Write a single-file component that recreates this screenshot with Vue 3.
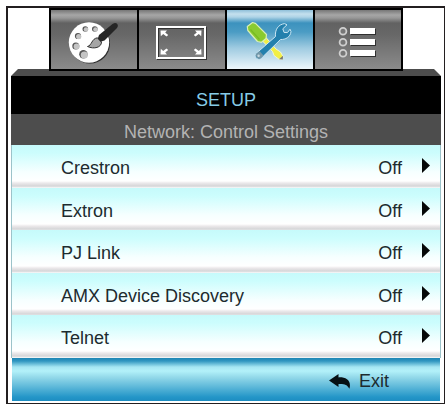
<script setup>
import { ref } from 'vue'

const activeTab = ref('setup')
const tabs = [
  { id: 'image', label: 'Image' },
  { id: 'display', label: 'Display' },
  { id: 'setup', label: 'Setup' },
  { id: 'options', label: 'Options' },
]

const settings = ref([
  { name: 'Crestron', on: false },
  { name: 'Extron', on: false },
  { name: 'PJ Link', on: false },
  { name: 'AMX Device Discovery', on: false },
  { name: 'Telnet', on: false },
])
</script>

<template>
  <main class="frame">
    <nav class="tabs">
      <button
        v-for="tab in tabs"
        :key="tab.id"
        type="button"
        class="tab"
        :class="{ active: tab.id === activeTab }"
        :aria-label="tab.label"
        @click="activeTab = tab.id"
      >
        <svg v-if="tab.id === 'image'" class="icon" viewBox="51 10 86 59" aria-hidden="true">
          <circle cx="90" cy="43.5" r="20" fill="#2b2b2b" />
          <circle cx="89" cy="42.5" r="20.2" fill="#fff" />
          <g fill="#555">
            <circle cx="85.3" cy="29" r="2.8" />
            <circle cx="94.8" cy="29" r="2.8" />
            <circle cx="78" cy="36" r="3.1" />
            <circle cx="75.8" cy="46" r="3.5" />
            <circle cx="83.4" cy="54.3" r="4.2" />
          </g>
          <g fill="#c4c4c4">
            <circle cx="86" cy="29.5" r="2.3" />
            <circle cx="95.5" cy="29.5" r="2.3" />
            <circle cx="78.7" cy="36.6" r="2.6" />
            <circle cx="76.6" cy="46.6" r="3" />
            <circle cx="84.3" cy="55" r="3.6" />
          </g>
          <path d="M87.5 46.5C92 45.5 91.5 38.5 97.5 37.8L101.5 42C101.5 47.5 94 49.5 87.5 46.5Z" fill="#a5a5a5" stroke="#333" stroke-width="1" />
          <path d="M97.8 38.6L100.5 41.8L104.5 40.5L117 28Q118.8 25 116.8 23.4Q115 22.4 112.5 24L99 35Z" fill="#262626" />
        </svg>

        <svg v-else-if="tab.id === 'display'" class="icon" viewBox="139 10 86 59" aria-hidden="true">
          <rect x="158" y="28" width="48" height="31" fill="none" stroke="#333" stroke-width="2" />
          <rect x="157" y="27" width="48" height="31" fill="none" stroke="#fff" stroke-width="2" />
          <g fill="#fff">
            <path d="M160.5 30.5H167L165.2 32.4L168.2 35L166.5 36.6L163.2 34L160.8 36.2Z" />
            <path d="M201.5 30.5H195L196.8 32.4L193.8 35L195.5 36.6L198.8 34L201.2 36.2Z" />
            <path d="M160.5 54.5H167L165.2 52.6L168.2 50L166.5 48.4L163.2 51L160.8 48.8Z" />
            <path d="M201.5 54.5H195L196.8 52.6L193.8 50L195.5 48.4L198.8 51L201.2 48.8Z" />
          </g>
        </svg>

        <svg v-else-if="tab.id === 'setup'" class="icon" viewBox="227 10 86 59" aria-hidden="true">
          <path d="M262.5 41L266 37.5L276 49L280.5 52L283 56.5L282.5 59.3L279 59.3L274 55.5L272.5 51.5Z" fill="#f2ef45" stroke="#f1f6d4" stroke-width="1" stroke-linejoin="round" />
          <path d="M279 59.3L283 55.8L282.8 59.5Z" fill="#777" />
          <path d="M247.3 26.5L252.5 22.5L255.5 23.3L266.5 34.5L266 38.5L261.5 42.3L257.5 41.5L247.8 30.5Z" fill="#8acb2f" stroke="#d9efb8" stroke-width="1.2" stroke-linejoin="round" />
          <path d="M250.5 29.5L259.5 39.5" stroke="#78bb22" stroke-width="1.2" />
          <path d="M255.5 54L275.5 36.5C274.8 30 278 24.5 284.5 23.6L287 24.8L282.8 28.8L284 32.4L287.5 32.6L290 29.2L291 31.5C290.5 37 285.5 39.8 280.5 39.5L261 58.5C258.5 60.5 254 57.5 255.5 54Z" fill="#2380ad" stroke="#c9e5f2" stroke-width="1" stroke-linejoin="round" />
          <path d="M255.8 54.2L259.5 51L263.5 55.5L260.5 58.5C258.5 59.5 255.5 57 255.8 54.2Z" fill="#7397a8" />
          <circle cx="258.6" cy="55.8" r="1.2" fill="#c9dbe3" />
        </svg>

        <svg v-else class="icon" viewBox="315 10 86 59" aria-hidden="true">
          <g fill="#303030">
            <rect x="351" y="29" width="25" height="6" />
            <rect x="351" y="40" width="25" height="6" />
            <rect x="351" y="51" width="25" height="6" />
          </g>
          <g fill="#fff">
            <rect x="350" y="28" width="25" height="6" />
            <rect x="350" y="39" width="25" height="6" />
            <rect x="350" y="50" width="25" height="6" />
          </g>
          <g fill="#777" stroke="#cfcfcf" stroke-width="1.8">
            <circle cx="343" cy="31.3" r="3.4" />
            <circle cx="343" cy="42.3" r="3.4" />
            <circle cx="343" cy="53.3" r="3.4" />
          </g>
        </svg>
      </button>
    </nav>

    <section class="panel">
      <div class="bevel"></div>
      <h1 class="title">SETUP</h1>
      <h2 class="subtitle">Network: Control Settings</h2>

      <div class="rows">
        <button
          v-for="item in settings"
          :key="item.name"
          type="button"
          class="row"
          @click="item.on = !item.on"
        >
          <span class="name">{{ item.name }}</span>
          <span class="value">{{ item.on ? 'On' : 'Off' }}</span>
          <svg class="arrow" viewBox="0 0 8 15" aria-hidden="true">
            <path d="M0 0L8 7.5L0 15Z" fill="#050808" />
          </svg>
        </button>
      </div>

      <button type="button" class="exit">
        <svg class="back" viewBox="0 0 22 16" aria-hidden="true">
          <path d="M0 7.5L9.5 1V4.4C17 4 22.8 7.5 20.4 15.8C18 11.4 15.5 10.8 9.5 11V14Z" fill="#061014" />
        </svg>
        <span>Exit</span>
      </button>
    </section>
  </main>
</template>

<style>
body {
  background: #fff;
}
</style>

<style scoped>
.frame {
  margin: 6px 0 0 6px;
  padding-bottom: 2px;
  border: solid #231f20;
  border-width: 2px 1px 1px 2px;
  font-family: "Liberation Sans", Arial, sans-serif;
  font-size: 18px;
  color: #1d2b2f;
}

button {
  appearance: none;
  margin: 0;
  padding: 0;
  border: 0;
  border-radius: 0;
  font: inherit;
  color: inherit;
  cursor: pointer;
}

.tabs {
  position: relative;
  z-index: 1;
  display: grid;
  grid-template-columns: repeat(4, 1fr);
  margin: 0 41px -2px;
  border-left: 2px solid #000;
}

.tab {
  display: flex;
  justify-content: center;
  border: solid #000;
  border-width: 2px 2px 2px 0;
  background: linear-gradient(#777 0, #a6a6a6 5px, #979797 8px, #626262 13px, #676767 24px, #8b8b8b 100%);
}

.tab.active {
  background: linear-gradient(#8fbfd9 0, #c4e0ee 4px, #aed3e6 7px, #3c92be 13px, #4b9cc4 22px, #9fcbe1 38px, #edf6fb 100%);
}

.icon {
  display: block;
  width: 86px;
  height: 59px;
}

.panel {
  margin: 0 3px;
}

.bevel {
  height: 7px;
  background: #4d4d4d;
  clip-path: polygon(7px 0, calc(100% - 7px) 0, 100% 100%, 0 100%);
}

.title,
.subtitle {
  margin: 0;
  font-size: 18px;
  font-weight: normal;
  text-align: center;
}

.title {
  padding: 13px 0 3px;
  line-height: 22px;
  color: #86cbe6;
  background: #000;
}

.subtitle {
  padding: 6px 0 1px;
  line-height: 24px;
  color: #b3b3b3;
  background: #4d4d4d;
}

.rows {
  border: solid #9cc3ca;
  border-width: 0 1px;
}

.row {
  display: flex;
  align-items: center;
  width: 100%;
  height: 43px;
  padding: 4px 10px 0 49px;
  text-align: left;
  background: linear-gradient(#c6fafb 0, #ccfdfd 8px, #f6ffff 27px, #fff 36px, #ece9eb 38px, #d6d6d8 41px, #e4e6e8 42px, #fff 100%);
}

.row:nth-child(even) {
  height: 42px;
}

.name {
  flex: 1;
}

.value {
  margin-right: 20px;
}

.arrow {
  width: 8px;
  height: 15px;
  margin-bottom: 6px;
}

.exit {
  display: flex;
  align-items: center;
  justify-content: flex-end;
  gap: 8px;
  width: 100%;
  height: 43px;
  padding: 3px 51px 0 0;
  border: solid #fff;
  border-width: 0 1px;
  background: linear-gradient(#1f86b5 0, #2f95c0 3px, #a5e6f3 9px, #b3f1f9 13px, #8fd6e8 20px, #2496c8 39px, #1d8dc2 100%);
}

.back {
  width: 22px;
  height: 16px;
}
</style>
